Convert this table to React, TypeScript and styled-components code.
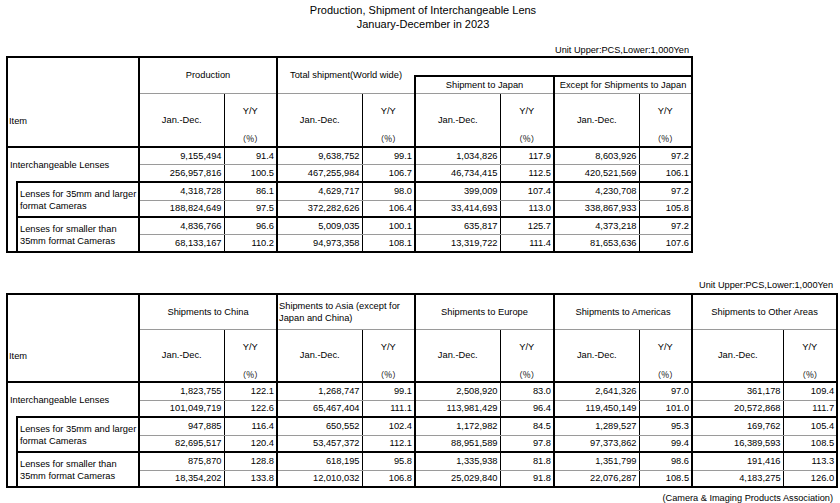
import React from 'react';
import styled, { createGlobalStyle } from 'styled-components';

const THICK = '2px solid #000';
const THIN = '1px solid #000';
const SOFT = '1px solid #9a9a9a';
const NONE = 'none';

const GlobalStyle = createGlobalStyle`
  html, body { margin: 0; padding: 0; background: #fff; }
  body { font-family: "Liberation Sans", Arial, sans-serif; color: #000; }
`;

const Page = styled.div`
  width: 840px;
  height: 503px;
  box-sizing: border-box;
  padding: 4px 0 0 6px;
  overflow: hidden;
  display: flex;
  flex-direction: column;
`;

const Title = styled.h1`
  margin: 0;
  font-size: 11px;
  font-weight: normal;
  line-height: 13.5px;
  text-align: center;
`;

const Section = styled.section<{ $width: number; $top: number }>`
  width: ${(p) => p.$width}px;
  margin-top: ${(p) => p.$top}px;
  display: flex;
  flex-direction: column;
`;

const UnitNote = styled.div<{ $pad: number; $gap: number }>`
  font-size: 9.2px;
  line-height: 11px;
  text-align: right;
  padding-right: ${(p) => p.$pad}px;
  margin-bottom: ${(p) => p.$gap}px;
`;

const Footer = styled.div`
  width: 827px;
  margin-top: 5px;
  font-size: 9.2px;
  line-height: 11px;
  text-align: right;
`;

const Grid = styled.table<{ $width: number }>`
  border-collapse: collapse;
  table-layout: fixed;
  width: ${(p) => p.$width}px;
  font-size: 9.3px;
  border: ${THICK};
`;

const Row = styled.tr<{ $h: number }>`
  height: ${(p) => p.$h}px;
`;

type Sides = { t?: string; r?: string; b?: string; l?: string };

const Cell = styled.td<{ $s?: Sides }>`
  padding: 0;
  vertical-align: middle;
  line-height: 12px;
  border: ${THIN};
  ${(p) => (p.$s?.t ? `border-top: ${p.$s.t};` : '')}
  ${(p) => (p.$s?.r ? `border-right: ${p.$s.r};` : '')}
  ${(p) => (p.$s?.b ? `border-bottom: ${p.$s.b};` : '')}
  ${(p) => (p.$s?.l ? `border-left: ${p.$s.l};` : '')}
`;

const GroupHead = styled(Cell)<{ $left?: boolean }>`
  text-align: ${(p) => (p.$left ? 'left' : 'center')};
  padding-left: ${(p) => (p.$left ? '1px' : '0')};
  white-space: ${(p) => (p.$left ? 'normal' : 'nowrap')};
`;

const ItemHead = styled(Cell)`
  text-align: left;
  vertical-align: bottom;
  padding: 0 0 19px 1px;
`;

const PeriodHead = styled(Cell)`
  text-align: center;
`;

const RatioHead = styled(Cell)`
  text-align: center;
  vertical-align: top;
`;

const RatioStack = styled.div`
  display: flex;
  flex-direction: column;
  align-items: center;
  gap: 15px;
  padding-top: 11px;
`;

const Percent = styled.span`
  font-family: "Noto Sans CJK JP", "Liberation Sans", sans-serif;
  font-size: 8.5px;
  line-height: 12px;
`;

const Label = styled(Cell)<{ $indent?: number }>`
  text-align: left;
  padding-left: ${(p) => p.$indent ?? 2}px;
`;

const Spacer = styled(Cell)``;

const Num = styled(Cell)`
  text-align: right;
  padding-right: 2px;
  white-space: nowrap;
`;

type Group = { label: string; rows: [string[], string[]] };

const table1: Group[] = [
  {
    label: 'Interchangeable Lenses',
    rows: [
      ['9,155,494', '91.4', '9,638,752', '99.1', '1,034,826', '117.9', '8,603,926', '97.2'],
      ['256,957,816', '100.5', '467,255,984', '106.7', '46,734,415', '112.5', '420,521,569', '106.1'],
    ],
  },
  {
    label: 'Lenses for 35mm and larger format Cameras',
    rows: [
      ['4,318,728', '86.1', '4,629,717', '98.0', '399,009', '107.4', '4,230,708', '97.2'],
      ['188,824,649', '97.5', '372,282,626', '106.4', '33,414,693', '113.0', '338,867,933', '105.8'],
    ],
  },
  {
    label: 'Lenses for smaller than 35mm format Cameras',
    rows: [
      ['4,836,766', '96.6', '5,009,035', '100.1', '635,817', '125.7', '4,373,218', '97.2'],
      ['68,133,167', '110.2', '94,973,358', '108.1', '13,319,722', '111.4', '81,653,636', '107.6'],
    ],
  },
];

const table2: Group[] = [
  {
    label: 'Interchangeable Lenses',
    rows: [
      ['1,823,755', '122.1', '1,268,747', '99.1', '2,508,920', '83.0', '2,641,326', '97.0', '361,178', '109.4'],
      ['101,049,719', '122.6', '65,467,404', '111.1', '113,981,429', '96.4', '119,450,149', '101.0', '20,572,868', '111.7'],
    ],
  },
  {
    label: 'Lenses for 35mm and larger format Cameras',
    rows: [
      ['947,885', '116.4', '650,552', '102.4', '1,172,982', '84.5', '1,289,527', '95.3', '169,762', '105.4'],
      ['82,695,517', '120.4', '53,457,372', '112.1', '88,951,589', '97.8', '97,373,862', '99.4', '16,389,593', '108.5'],
    ],
  },
  {
    label: 'Lenses for smaller than 35mm format Cameras',
    rows: [
      ['875,870', '128.8', '618,195', '95.8', '1,335,938', '81.8', '1,351,799', '98.6', '191,416', '113.3'],
      ['18,354,202', '133.8', '12,010,032', '106.8', '25,029,840', '91.8', '22,076,287', '108.5', '4,183,275', '126.0'],
    ],
  },
];

const T1_COLS = [10, 122, 85, 53, 85, 53, 85, 54, 85, 53];
const T2_COLS = [10, 122, 85, 53, 85, 53, 85, 54, 85, 53, 91, 54];

const sum = (a: number[]) => a.reduce((x, y) => x + y, 0);

const Cols = ({ widths }: { widths: number[] }) => (
  <colgroup>
    {widths.map((w, i) => (
      <col key={i} style={{ width: w }} />
    ))}
  </colgroup>
);

const PeriodRow = ({ count, h }: { count: number; h: number }) => (
  <Row $h={h}>
    {Array.from({ length: count }).flatMap((_, i) => [
      <PeriodHead key={`p${i}`} $s={{ r: THIN, b: THICK }}>
        Jan.-Dec.
      </PeriodHead>,
      <RatioHead key={`r${i}`} $s={{ r: THICK, b: THICK }}>
        <RatioStack>
          <span>Y/Y</span>
          <Percent>（%）</Percent>
        </RatioStack>
      </RatioHead>,
    ])}
  </Row>
);

const NumCells = ({ values, top, bottom }: { values: string[]; top: string; bottom: string }) => (
  <>
    {values.map((v, i) => (
      <Num key={i} $s={{ t: top, b: bottom, r: i % 2 === 0 ? THIN : THICK }}>
        {v}
      </Num>
    ))}
  </>
);

const DataBody = ({ groups, heights }: { groups: Group[]; heights: number[] }) => (
  <>
    {groups.map((g, gi) => {
      const first = gi === 0;
      const [a, b] = g.rows;
      return (
        <React.Fragment key={gi}>
          <Row $h={heights[gi * 2]}>
            {first ? (
              <Label colSpan={2} rowSpan={2} $s={{ r: THICK, b: NONE }}>
                {g.label}
              </Label>
            ) : (
              <>
                {gi === 1 && <Spacer rowSpan={4} $s={{ t: NONE, r: THICK, b: THICK }} />}
                <Label rowSpan={2} $s={{ t: THICK, r: THICK, b: THICK, l: THICK }}>
                  {g.label}
                </Label>
              </>
            )}
            <NumCells values={a} top={THICK} bottom={SOFT} />
          </Row>
          <Row $h={heights[gi * 2 + 1]}>
            <NumCells values={b} top={SOFT} bottom={THICK} />
          </Row>
        </React.Fragment>
      );
    })}
  </>
);

export default function App() {
  return (
    <>
      <GlobalStyle />
      <Page>
        <Title>
          Production, Shipment of Interchangeable Lens
          <br />
          January-December in 2023
        </Title>

        <Section $width={687} $top={14}>
          <UnitNote $pad={4} $gap={0}>
            Unit Upper:PCS,Lower:1,000Yen
          </UnitNote>
          <Grid $width={sum(T1_COLS)}>
            <Cols widths={T1_COLS} />
            <tbody>
              <Row $h={19}>
                <ItemHead colSpan={2} rowSpan={3} $s={{ r: THICK, b: THICK }}>
                  Item
                </ItemHead>
                <GroupHead colSpan={2} rowSpan={2} $s={{ r: THICK, b: SOFT }}>
                  Production
                </GroupHead>
                <GroupHead colSpan={2} rowSpan={2} $s={{ r: NONE, b: SOFT }}>
                  Total shipment(World wide)
                </GroupHead>
                <GroupHead colSpan={4} $s={{ l: NONE, b: THICK }} />
              </Row>
              <Row $h={17}>
                <GroupHead colSpan={2} $s={{ t: THICK, l: THICK, r: THICK, b: SOFT }}>
                  Shipment to Japan
                </GroupHead>
                <GroupHead colSpan={2} $s={{ t: THICK, r: THICK, b: SOFT }}>
                  Except for Shipments to Japan
                </GroupHead>
              </Row>
              <PeriodRow count={4} h={54} />
              <DataBody groups={table1} heights={[17, 18, 18, 17, 17, 18]} />
            </tbody>
          </Grid>
        </Section>

        <Section $width={832} $top={27}>
          <UnitNote $pad={5} $gap={2}>
            Unit Upper:PCS,Lower:1,000Yen
          </UnitNote>
          <Grid $width={sum(T2_COLS)}>
            <Cols widths={T2_COLS} />
            <tbody>
              <Row $h={35}>
                <ItemHead colSpan={2} rowSpan={2} $s={{ r: THICK, b: THICK }}>
                  Item
                </ItemHead>
                <GroupHead colSpan={2} $s={{ r: THICK, b: SOFT }}>
                  Shipments to China
                </GroupHead>
                <GroupHead colSpan={2} $left $s={{ r: THICK, b: SOFT }}>
                  Shipments to Asia (except for Japan and China)
                </GroupHead>
                <GroupHead colSpan={2} $s={{ r: THICK, b: SOFT }}>
                  Shipments to Europe
                </GroupHead>
                <GroupHead colSpan={2} $s={{ r: THICK, b: SOFT }}>
                  Shipments to Americas
                </GroupHead>
                <GroupHead colSpan={2} $s={{ r: THICK, b: SOFT }}>
                  Shipments to Other Areas
                </GroupHead>
              </Row>
              <PeriodRow count={5} h={53} />
              <DataBody groups={table2} heights={[18, 17, 18, 17, 18, 17]} />
            </tbody>
          </Grid>
        </Section>

        <Footer>(Camera &amp; Imaging Products Association)</Footer>
      </Page>
    </>
  );
}
